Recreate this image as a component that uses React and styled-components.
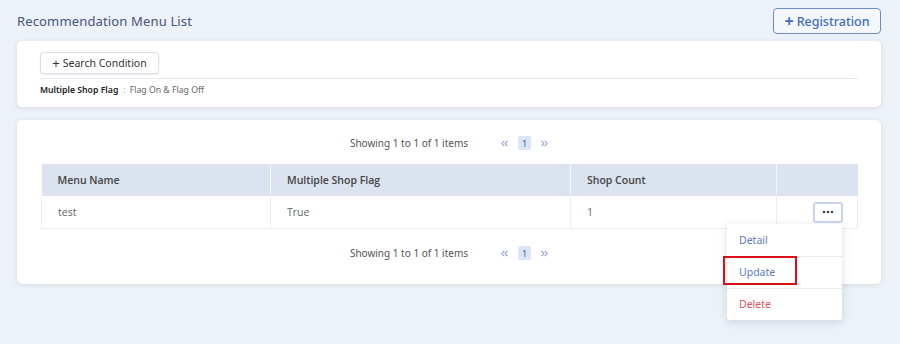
import React from "react";
import styled, { createGlobalStyle } from "styled-components";
import { ChevronsLeft, ChevronsRight } from "lucide-react";

const GlobalStyle = createGlobalStyle`
  html, body, #root {
    min-height: 100%;
    height: 100%;
  }
  body {
    margin: 0;
    background: #edf1f8;
    font-family: "Noto Sans", "Open Sans", Arial, sans-serif;
  }
`;

const columns = [
  { label: "Menu Name", width: 229 },
  { label: "Multiple Shop Flag", width: 300 },
  { label: "Shop Count", width: 206 },
  { label: "", width: 81 },
];

const rows = [{ name: "test", flag: "True", count: "1" }];

const Pagination = ({ gap }) => (
  <PagerRow gap={gap}>
    <PagerText>Showing 1 to 1 of 1 items</PagerText>
    <PagerNav>
      <ChevronsLeft size={11} strokeWidth={2.2} color="#8195c6" />
      <PageNum>1</PageNum>
      <ChevronsRight size={11} strokeWidth={2.2} color="#8195c6" />
    </PagerNav>
  </PagerRow>
);

const Dots = () => (
  <svg width="12" height="4" viewBox="0 0 12 4">
    <circle cx="2" cy="2" r="1.3" fill="#3d4354" />
    <circle cx="6" cy="2" r="1.3" fill="#3d4354" />
    <circle cx="10" cy="2" r="1.3" fill="#3d4354" />
  </svg>
);

const App = () => {
  return (
    <>
      <GlobalStyle />
      <Page>
        <Header>
          <Title>Recommendation Menu List</Title>
          <RegButton>
            <PlusMark bold>+</PlusMark> Registration
          </RegButton>
        </Header>

        <Card pad="11px 23px 11px">
          <SearchButton>
            <PlusMark>+</PlusMark> Search Condition
          </SearchButton>
          <Divider />
          <Condition>
            <b>Multiple Shop Flag</b>
            <Colon>:</Colon>
            Flag On &amp; Flag Off
          </Condition>
        </Card>

        <Card pad="9px 24px 17px">
          <Pagination gap="0 0 7px" />
          <Table>
            <colgroup>
              {columns.map((c, i) => (
                <col key={i} style={{ width: c.width }} />
              ))}
            </colgroup>
            <thead>
              <tr>
                {columns.map((c, i) => (
                  <Th key={i}>{c.label}</Th>
                ))}
              </tr>
            </thead>
            <tbody>
              {rows.map((r, i) => (
                <tr key={i}>
                  <Td>{r.name}</Td>
                  <Td>{r.flag}</Td>
                  <Td>{r.count}</Td>
                  <ActionTd>
                    <ActionWrap>
                      <MoreButton>
                        <Dots />
                      </MoreButton>
                      <Menu>
                        <MenuItem tone="#5b7cbf">Detail</MenuItem>
                        <MenuItem tone="#5b7cbf">
                          Update
                          <Highlight />
                        </MenuItem>
                        <MenuItem tone="#e0505c">Delete</MenuItem>
                      </Menu>
                    </ActionWrap>
                  </ActionTd>
                </tr>
              ))}
            </tbody>
          </Table>
          <Pagination gap="10px 0 0" />
        </Card>
      </Page>
    </>
  );
};

export default App;

const Page = styled.div`
  padding: 0 19px 0 17px;
  display: flex;
  flex-direction: column;
  gap: 13px;
`;

const Header = styled.div`
  height: 41px;
  display: flex;
  align-items: center;
  justify-content: space-between;
  margin-bottom: -13px;
`;

const Title = styled.h1`
  margin: 0;
  font-size: 13px;
  font-weight: 400;
  color: #45557d;
  letter-spacing: 0.15px;
`;

const RegButton = styled.button`
  height: 26px;
  width: 108px;
  margin-top: 1px;
  border: 1px solid #6f8ccb;
  border-radius: 4px;
  background: #f4f7fc;
  color: #3f6cc0;
  font-family: inherit;
  font-size: 12.5px;
  font-weight: 500;
  padding: 0;
  display: flex;
  align-items: center;
  justify-content: center;
  gap: 3px;
`;

const PlusMark = styled.span`
  font-size: ${({ bold }) => (bold ? "16px" : "13px")};
  font-weight: ${({ bold }) => (bold ? 700 : 400)};
  line-height: 1;
`;

const Card = styled.div`
  background: #fff;
  border-radius: 5px;
  padding: ${({ pad }) => pad};
  box-shadow: 0 1px 4px rgba(120, 130, 170, 0.22);
`;

const SearchButton = styled.button`
  height: 22px;
  width: 119px;
  border: 1px solid #dcdfe5;
  border-radius: 3px;
  background: #fff;
  box-shadow: 0 1px 2px rgba(0, 0, 0, 0.08);
  font-family: inherit;
  font-size: 10.5px;
  color: #333;
  padding: 0;
  display: flex;
  align-items: center;
  justify-content: center;
  gap: 3px;
`;

const Divider = styled.div`
  height: 1px;
  background: #e6e8ed;
  margin: 4px 0 5px;
`;

const Condition = styled.div`
  font-size: 8.7px;
  color: #666;
  b {
    color: #222;
    font-weight: 600;
  }
`;

const Colon = styled.span`
  color: #999;
  margin: 0 4px 0 5px;
`;

const PagerRow = styled.div`
  height: 28px;
  margin: ${({ gap }) => gap};
  display: flex;
  align-items: center;
  justify-content: center;
  gap: 31px;
  padding-left: 2px;
`;

const PagerText = styled.span`
  font-size: 10px;
  color: #555;
`;

const PagerNav = styled.div`
  display: flex;
  align-items: center;
  gap: 8px;
`;

const PageNum = styled.span`
  width: 13px;
  height: 14px;
  background: #dbe5f5;
  border-radius: 2px;
  color: #3f5ea8;
  font-size: 9px;
  display: flex;
  align-items: center;
  justify-content: center;
`;

const Table = styled.table`
  width: 816px;
  border-collapse: collapse;
  table-layout: fixed;
  font-family: "Open Sans", "Noto Sans", Arial, sans-serif;
  font-size: 10.5px;
`;

const Th = styled.th`
  height: 32px;
  background: #dbe3ef;
  text-align: left;
  font-weight: 600;
  color: #444;
  padding: 0 0 0 16px;
  border-left: 1px solid #f3f6fa;
  &:first-child {
    border-left: none;
  }
`;

const Td = styled.td`
  height: 32px;
  padding: 0 0 0 16px;
  color: #666;
  border: 1px solid #eceef2;
  border-top: none;
`;

const ActionTd = styled(Td)`
  padding: 0 14px 0 0;
`;

const ActionWrap = styled.div`
  position: relative;
  display: flex;
  justify-content: flex-end;
`;

const MoreButton = styled.button`
  width: 30px;
  height: 21px;
  border: 2px solid #c9d5f0;
  border-radius: 3px;
  background: #fff;
  padding: 0;
  display: flex;
  align-items: center;
  justify-content: center;
`;

const Menu = styled.div`
  position: absolute;
  top: 22px;
  right: 1px;
  width: 115px;
  background: #fff;
  border-radius: 3px;
  box-shadow: 0 2px 8px rgba(90, 100, 130, 0.22);
  font-family: "Noto Sans", Arial, sans-serif;
  z-index: 2;
`;

const MenuItem = styled.div`
  position: relative;
  height: 31px;
  display: flex;
  align-items: center;
  padding-left: 12px;
  font-size: 10.5px;
  color: ${({ tone }) => tone};
  border-top: 1px solid #e7e9ee;
  &:first-child {
    border-top: none;
    height: 32px;
  }
`;

const Highlight = styled.span`
  position: absolute;
  left: -4px;
  top: -1px;
  width: 74px;
  height: 29px;
  border: 2px solid #d9101c;
  box-sizing: border-box;
`;
